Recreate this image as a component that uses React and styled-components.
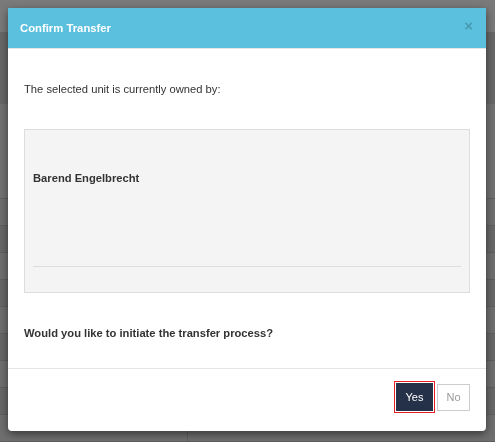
import React from "react";
import styled, { createGlobalStyle } from "styled-components";

const GlobalStyle = createGlobalStyle`
  html, body {
    margin: 0;
    padding: 0;
    background: #707070;
    font-family: "Liberation Sans", Arial, sans-serif;
  }
`;

const Page = styled.div`
  width: 495px;
  height: 442px;
  overflow: hidden;
  display: flex;
  flex-direction: column;
`;

const TopBar = styled.div`
  height: 33px;
  background: #7a7a7a;
`;

const Band = styled.div`
  height: 75px;
  background: #686868;
`;

const Filler = styled.div`
  height: 98px;
  background: #727272;
  border-bottom: 1px solid #606060;
`;

const Row = styled.div`
  height: 26px;
  flex-shrink: 0;
  background: ${(p) => (p.$dark ? "#686868" : "#6f6f6f")};
  border-bottom: 1px solid #5f5f5f;
  display: grid;
  grid-template-columns: 188px 1fr;
`;

const Cell = styled.div`
  border-right: 1px solid #606060;
`;

const Overlay = styled.div`
  position: fixed;
  inset: 0;
  padding: 8px;
`;

const Modal = styled.div`
  width: 478px;
  background: #fff;
  border-radius: 0 0 4px 4px;
  box-shadow: 0 3px 9px rgba(0, 0, 0, 0.5);
  display: flex;
  flex-direction: column;
`;

const Header = styled.div`
  height: 39px;
  background: #5bc0de;
  border-bottom: 1px solid #e5e5e5;
  display: flex;
  align-items: center;
  justify-content: space-between;
  padding: 0 13px 1px 12px;
`;

const Title = styled.h4`
  margin: 0;
  color: #fff;
  font-size: 11.3px;
  line-height: 14px;
  font-weight: bold;
`;

const Close = styled.span`
  color: #000;
  opacity: 0.2;
  font-size: 15px;
  font-weight: bold;
  line-height: 1;
  margin-top: -5px;
`;

const Body = styled.div`
  padding: 33px 16px 28px 16px;
  display: flex;
  flex-direction: column;
`;

const Text = styled.p`
  margin: 0;
  font-size: 11.2px;
  line-height: 14px;
  color: #333;
  font-weight: ${(p) => (p.$bold ? "bold" : "normal")};
`;

const OwnerBox = styled.div`
  margin: 33px 0 33px 0;
  height: 162px;
  background: #f4f4f4;
  border: 1px solid #ddd;
  padding: 0 8px;
  display: flex;
  flex-direction: column;
`;

const OwnerName = styled.div`
  margin-top: 41px;
  font-size: 11.2px;
  line-height: 14px;
  font-weight: bold;
  color: #333;
`;

const Rule = styled.hr`
  margin: auto 0 25px 0;
  border: 0;
  border-top: 1px solid #ddd;
`;

const Footer = styled.div`
  border-top: 1px solid #e5e5e5;
  padding: 14px 16px 20px 16px;
  display: flex;
  justify-content: flex-end;
  align-items: center;
  gap: 4px;
`;

const Button = styled.button`
  font-family: "Liberation Sans", Arial, sans-serif;
  font-size: 11px;
  width: ${(p) => (p.$primary ? "37px" : "33px")};
  height: ${(p) => (p.$primary ? "28px" : "27px")};
  padding: 0;
  border: 1px solid ${(p) => (p.$primary ? "#253149" : "#ccc")};
  background: ${(p) => (p.$primary ? "#253149" : "#fff")};
  color: ${(p) => (p.$primary ? "#fff" : "#999")};
  outline: ${(p) => (p.$primary ? "1px solid #e31e24" : "none")};
  outline-offset: 1px;
  border-radius: 0;
`;

export default function App() {
  const rows = Array.from({ length: 9 });
  return (
    <>
      <GlobalStyle />
      <Page>
        <TopBar />
        <Band />
        <Filler />
        {rows.map((_, i) => (
          <Row key={i} $dark={i % 2 === 1}>
            <Cell />
            <div />
          </Row>
        ))}
      </Page>
      <Overlay>
        <Modal>
          <Header>
            <Title>Confirm Transfer</Title>
            <Close>×</Close>
          </Header>
          <Body>
            <Text>The selected unit is currently owned by:</Text>
            <OwnerBox>
              <OwnerName>Barend Engelbrecht</OwnerName>
              <Rule />
            </OwnerBox>
            <Text $bold>Would you like to initiate the transfer process?</Text>
          </Body>
          <Footer>
            <Button $primary>Yes</Button>
            <Button>No</Button>
          </Footer>
        </Modal>
      </Overlay>
    </>
  );
}
